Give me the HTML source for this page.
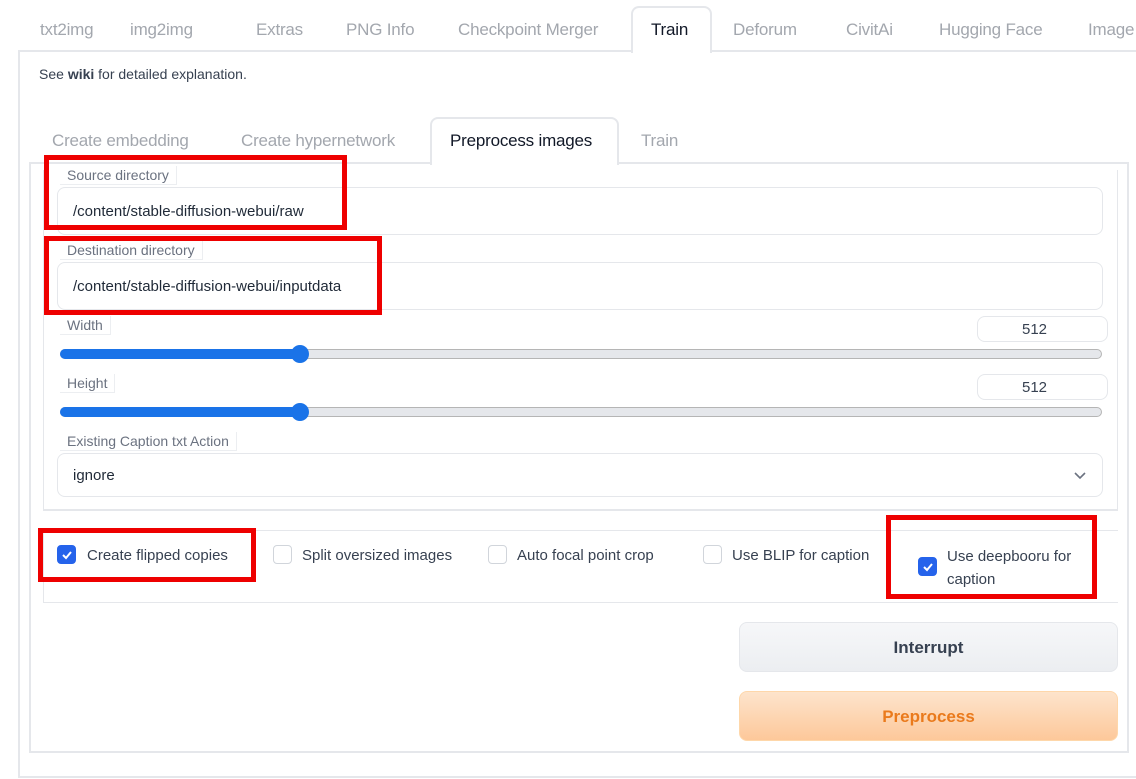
<!DOCTYPE html>
<html><head><meta charset="utf-8"><style>
*{box-sizing:border-box;margin:0;padding:0}
body{width:1136px;height:779px;background:#fff;font-family:"Liberation Sans",sans-serif;position:relative;overflow:hidden;color:#374151}
.a{position:absolute}
.tab{position:absolute;top:20px;font-size:17px;color:#a3a7ae;white-space:nowrap;letter-spacing:-0.2px}
.stab{position:absolute;top:131px;font-size:17px;color:#a3a7ae;white-space:nowrap;letter-spacing:-0.2px}
.lbl{position:absolute;font-size:14px;color:#6b7280;background:#fff;border:1px solid #eceef1;border-top:none;border-left:none;padding:1px 7px;white-space:nowrap}
.inp{position:absolute;left:57px;width:1046px;border:1px solid #e5e7eb;border-radius:8px;background:#fff;font-size:15px;color:#1f2937;padding-left:15px}
.red{position:absolute;border:5px solid #ee0000}
.cb{position:absolute;width:19px;height:19px;border:1px solid #d1d5db;border-radius:4px;background:#fff}
.cb.on{background:#2563eb;border-color:#2563eb}
.cbt{position:absolute;font-size:15px;color:#374151;white-space:nowrap}
.track{position:absolute;left:60px;width:1042px;height:10px;border-radius:5px;background:#e5e7eb;border:1px solid #b5b5b5}
.fill{position:absolute;left:60px;width:240px;height:10px;border-radius:5px;background:#1a73e8}
.thumb{position:absolute;width:18px;height:18px;border-radius:50%;background:#1a73e8}
.num{position:absolute;left:977px;width:131px;height:26px;border:1px solid #e5e7eb;border-radius:8px;padding-left:44px;font-size:15px;line-height:25px;color:#374151}
</style></head><body>
<div class="tab" style="left:40px">txt2img</div>
<div class="tab" style="left:130px">img2img</div>
<div class="tab" style="left:256px">Extras</div>
<div class="tab" style="left:346px">PNG Info</div>
<div class="tab" style="left:458px">Checkpoint Merger</div>
<div class="tab" style="left:733px">Deforum</div>
<div class="tab" style="left:846px">CivitAi</div>
<div class="tab" style="left:939px">Hugging Face</div>
<div class="tab" style="left:1088px">Image</div>
<div class="a" style="left:18px;top:50px;width:1130px;height:728px;border:2px solid #e5e7eb"></div>
<div class="a" style="left:631px;top:6px;width:81px;height:47px;border:2px solid #e5e7eb;border-bottom:none;border-radius:8px 8px 0 0;background:#fff"></div>
<div class="tab" style="left:651px;color:#111827">Train</div>
<div class="a" style="left:39px;top:66px;font-size:14px;color:#374151">See <b>wiki</b> for detailed explanation.</div>
<div class="stab" style="left:52px">Create embedding</div>
<div class="stab" style="left:241px">Create hypernetwork</div>
<div class="stab" style="left:641px">Train</div>
<div class="a" style="left:29px;top:162px;width:1100px;height:591px;border:2px solid #e5e7eb"></div>
<div class="a" style="left:430px;top:117px;width:189px;height:48px;border:2px solid #e5e7eb;border-bottom:none;border-radius:8px 8px 0 0;background:#fff"></div>
<div class="stab" style="left:450px;color:#111827">Preprocess images</div>
<div class="a" style="left:43px;top:170px;width:1075px;height:341px;border:1px solid #e5e7eb;border-top:none;border-bottom:2px solid #e5e7eb"></div>
<div class="lbl" style="left:60px;top:166px">Source directory</div>
<div class="inp" style="top:187px;height:48px;line-height:48px">/content/stable-diffusion-webui/raw</div>
<div class="lbl" style="left:60px;top:241px">Destination directory</div>
<div class="inp" style="top:262px;height:48px;line-height:48px">/content/stable-diffusion-webui/inputdata</div>
<div class="lbl" style="left:60px;top:316px">Width</div>
<div class="num" style="top:316px">512</div>
<div class="track" style="top:349px"></div><div class="fill" style="top:349px"></div><div class="thumb" style="left:291px;top:345px"></div>
<div class="lbl" style="left:60px;top:374px">Height</div>
<div class="num" style="top:374px">512</div>
<div class="track" style="top:407px"></div><div class="fill" style="top:407px"></div><div class="thumb" style="left:291px;top:403px"></div>
<div class="lbl" style="left:60px;top:432px">Existing Caption txt Action</div>
<div class="inp" style="top:453px;height:44px;line-height:44px">ignore</div>
<svg class="a" style="left:1073px;top:471px" width="14" height="10"><path d="M2 2 L7 7 L12 2" stroke="#6b7280" stroke-width="1.6" fill="none"/></svg>
<div class="a" style="left:43px;top:530px;width:1075px;height:73px;border:1px solid #e5e7eb;border-right:none"></div>
<div class="cb on" style="left:57px;top:545px"><svg width="17" height="17"><path d="M5 9 L8 12 L13 6" stroke="#fff" stroke-width="2" fill="none"/></svg></div>
<div class="cbt" style="left:87px;top:547px">Create flipped copies</div>
<div class="cb" style="left:273px;top:545px"></div><div class="cbt" style="left:302px;top:547px">Split oversized images</div>
<div class="cb" style="left:488px;top:545px"></div><div class="cbt" style="left:517px;top:547px">Auto focal point crop</div>
<div class="cb" style="left:703px;top:545px"></div><div class="cbt" style="left:732px;top:547px">Use BLIP for caption</div>
<div class="cb on" style="left:918px;top:557px"><svg width="17" height="17"><path d="M5 9 L8 12 L13 6" stroke="#fff" stroke-width="2" fill="none"/></svg></div>
<div class="cbt" style="left:947px;top:545px;line-height:23px">Use deepbooru for<br>caption</div>
<div class="a" style="left:739px;top:622px;width:379px;height:50px;border:1px solid #e5e7eb;border-radius:8px;background:linear-gradient(#f6f7f9,#eceef1);text-align:center;line-height:50px;font-size:17px;font-weight:bold;color:#374151">Interrupt</div>
<div class="a" style="left:739px;top:691px;width:379px;height:50px;border:1px solid #fed7aa;border-radius:8px;background:linear-gradient(#fde4cc,#fdc89a);text-align:center;line-height:50px;font-size:17px;font-weight:bold;color:#ea7a1c">Preprocess</div>
<div class="red" style="left:44px;top:155px;width:303px;height:75px"></div>
<div class="red" style="left:44px;top:236px;width:338px;height:79px"></div>
<div class="red" style="left:38px;top:528px;width:218px;height:54px"></div>
<div class="red" style="left:886px;top:515px;width:211px;height:84px"></div>
</body></html>
